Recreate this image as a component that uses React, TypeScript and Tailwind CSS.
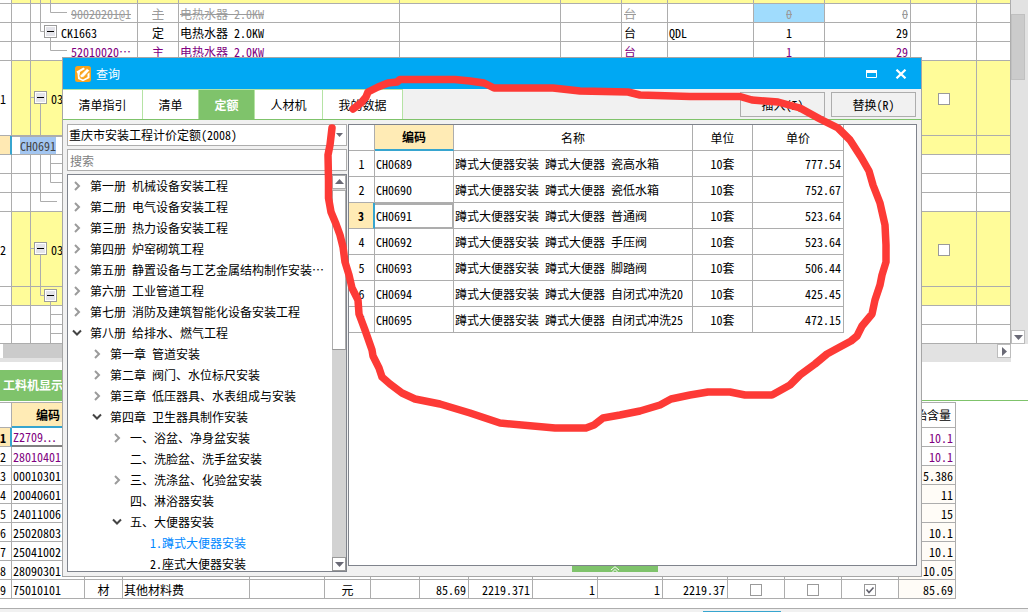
import { useState } from 'react';
import type { ReactNode } from 'react';

type TreeNode = { label: string; level: 0 | 1 | 2 | 3; state?: 'open' | 'closed' };

const tree: TreeNode[] = [
  { label: '第一册 机械设备安装工程', level: 0, state: 'closed' },
  { label: '第二册 电气设备安装工程', level: 0, state: 'closed' },
  { label: '第三册 热力设备安装工程', level: 0, state: 'closed' },
  { label: '第四册 炉窑砌筑工程', level: 0, state: 'closed' },
  { label: '第五册 静置设备与工艺金属结构制作安装⋯', level: 0, state: 'closed' },
  { label: '第六册 工业管道工程', level: 0, state: 'closed' },
  { label: '第七册 消防及建筑智能化设备安装工程', level: 0, state: 'closed' },
  { label: '第八册 给排水、燃气工程', level: 0, state: 'open' },
  { label: '第一章 管道安装', level: 1, state: 'closed' },
  { label: '第二章 阀门、水位标尺安装', level: 1, state: 'closed' },
  { label: '第三章 低压器具、水表组成与安装', level: 1, state: 'closed' },
  { label: '第四章 卫生器具制作安装', level: 1, state: 'open' },
  { label: '一、浴盆、净身盆安装', level: 2, state: 'closed' },
  { label: '二、洗脸盆、洗手盆安装', level: 2 },
  { label: '三、洗涤盆、化验盆安装', level: 2, state: 'closed' },
  { label: '四、淋浴器安装', level: 2 },
  { label: '五、大便器安装', level: 2, state: 'open' },
  { label: '1.蹲式大便器安装', level: 3 },
  { label: '2.座式大便器安装', level: 3 },
];

const indent = ['pl-1', 'pl-6', 'pl-11', 'pl-16'];

const quotas = [
  { code: 'CH0689', name: '蹲式大便器安装 蹲式大便器 瓷高水箱', unit: '10套', price: '777.54' },
  { code: 'CH0690', name: '蹲式大便器安装 蹲式大便器 瓷低水箱', unit: '10套', price: '752.67' },
  { code: 'CH0691', name: '蹲式大便器安装 蹲式大便器 普通阀', unit: '10套', price: '523.64' },
  { code: 'CH0692', name: '蹲式大便器安装 蹲式大便器 手压阀', unit: '10套', price: '523.64' },
  { code: 'CH0693', name: '蹲式大便器安装 蹲式大便器 脚踏阀', unit: '10套', price: '506.44' },
  { code: 'CH0694', name: '蹲式大便器安装 蹲式大便器 自闭式冲洗20', unit: '10套', price: '425.45' },
  { code: 'CH0695', name: '蹲式大便器安装 蹲式大便器 自闭式冲洗25', unit: '10套', price: '472.15' },
];

const materials = [
  { code: 'Z2709⋯', amount: '10.1', main: true },
  { code: '28010401', amount: '10.1', main: true },
  { code: '00010301', amount: '5.386' },
  { code: '20040601', amount: '11' },
  { code: '24011006', amount: '15' },
  { code: '25020803', amount: '10.1' },
  { code: '25041002', amount: '10.1' },
  { code: '28090301', amount: '10.05' },
];

const tabs = [
  { label: '清单指引', width: 'w-20' },
  { label: '清单', width: 'w-14' },
  { label: '定额', width: 'w-14' },
  { label: '人材机', width: 'w-17' },
  { label: '我的数据', width: 'w-20' },
];

function Cell({ children, className = '', span }: { children?: ReactNode; className?: string; span?: number }) {
  return (
    <td
      colSpan={span}
      className={`overflow-hidden whitespace-nowrap border-r border-b border-[#adadad] p-0 leading-4 ${className}`}
    >
      {children}
    </td>
  );
}

function Blank({ count, className = '' }: { count: number; className?: string }) {
  return (
    <>
      {Array.from({ length: count }, (_, i) => (
        <Cell key={i} className={className} />
      ))}
    </>
  );
}

function Tick({ label, checked = false }: { label: string; checked?: boolean }) {
  const [on, setOn] = useState(checked);
  return (
    <span className="relative mx-auto block size-3">
      <input
        type="checkbox"
        aria-label={label}
        checked={on}
        onChange={() => setOn(!on)}
        className="block size-3 appearance-none border border-[#9a9a9a] bg-white"
      />
      {on && (
        <svg viewBox="0 0 12 12" className="pointer-events-none absolute inset-0 size-3" fill="none" stroke="#62626e" strokeWidth="1.6">
          <path d="M2.5 5.5 5 8.5 9.5 3.5" />
        </svg>
      )}
    </span>
  );
}

function TreeBox({ x, y }: { x: number; y: number }) {
  return (
    <g>
      <rect x={x + 0.5} y={y + 0.5} width="12" height="12" fill="#fff" stroke="#9d9d9d" />
      <rect x={x + 2} y={y + 2} width="9" height="9" fill="#e4e4ea" />
      <path d={`M${x + 3} ${y + 6.5}h7`} stroke="#000" />
    </g>
  );
}

function BillTable() {
  const yellow = 'bg-[#fffc99]';
  return (
    <div className="relative min-w-0 flex-1">
      <table className="w-full table-fixed border-separate border-spacing-0 bg-white [&_td]:pt-px">
        <colgroup>
          <col className="w-3" />
          <col className="w-[19px]" />
          <col className="w-[107px]" />
          <col className="w-[41px]" />
          <col className="w-[221px]" />
          <col className="w-[161px]" />
          <col className="w-[61px]" />
          <col className="w-[46px]" />
          <col className="w-[86px]" />
          <col className="w-[71px]" />
          <col className="w-[86px]" />
          <col className="w-[66px]" />
          <col />
        </colgroup>
        <tbody>
          <tr className="h-1">
            <Cell />
            <Blank count={12} className={yellow} />
          </tr>
          <tr className="h-[19px] text-[#9b9b9b] line-through">
            <Blank count={2} />
            <Cell className="pl-10">90020201@1</Cell>
            <Cell className="text-center">主</Cell>
            <Cell className="pl-px">电热水器 2.0KW</Cell>
            <Blank count={2} />
            <Cell className="pl-0.5">台</Cell>
            <Cell />
            <Cell className="bg-[#a0dcfd] text-center">0</Cell>
            <Cell className="pr-0.5 text-right">0</Cell>
            <Blank count={2} />
          </tr>
          <tr className="h-[19px]">
            <Blank count={2} />
            <Cell className="pl-[30px]">CK1663</Cell>
            <Cell className="text-center">定</Cell>
            <Cell className="pl-px">电热水器 2.0KW</Cell>
            <Blank count={2} />
            <Cell className="pl-0.5">台</Cell>
            <Cell className="pl-px">QDL</Cell>
            <Cell className="text-center">1</Cell>
            <Cell className="pr-0.5 text-right">29</Cell>
            <Blank count={2} />
          </tr>
          <tr className="h-[19px] text-[#800080]">
            <Blank count={2} />
            <Cell className="pl-10">52010020⋯</Cell>
            <Cell className="text-center">主</Cell>
            <Cell className="pl-px">电热水器 2.0KW</Cell>
            <Blank count={2} />
            <Cell className="pl-0.5">台</Cell>
            <Cell />
            <Cell className="text-center">1</Cell>
            <Cell className="pr-0.5 text-right">29</Cell>
            <Blank count={2} />
          </tr>
          <tr className="h-[75px]">
            <Cell>1</Cell>
            <Cell className={yellow} />
            <Cell className={`${yellow} pl-5`}>03</Cell>
            <Blank count={8} className={yellow} />
            <Cell className={yellow}>
              <Tick label="清单 1" />
            </Cell>
            <Cell className={yellow} />
          </tr>
          <tr className="h-[19px]">
            <Cell className="border-r-2 border-r-[#37a5cf] bg-[#ffe9b3]" />
            <Cell span={2} className="border-t border-[#37a5cf] pl-2">
              <span className="bg-[#a3c6f1] text-[#444]">CH0691</span>
            </Cell>
            <Blank count={10} className={yellow} />
          </tr>
          <tr className="h-[19px]"><Blank count={13} /></tr>
          <tr className="h-[19px]"><Blank count={13} /></tr>
          <tr className="h-[19px]"><Blank count={13} /></tr>
          <tr className="h-[75px]">
            <Cell>2</Cell>
            <Cell className={yellow} />
            <Cell className={`${yellow} pl-5`}>03</Cell>
            <Blank count={8} className={yellow} />
            <Cell className={yellow}>
              <Tick label="清单 2" />
            </Cell>
            <Cell className={yellow} />
          </tr>
          <tr className="h-[19px]">
            <Cell />
            <Blank count={12} className={yellow} />
          </tr>
          <tr className="h-[19px]"><Blank count={13} /></tr>
          <tr className="h-[19px]"><Blank count={13} /></tr>
        </tbody>
      </table>
      {/* connector lines of the outline */}
      <svg width="70" height="344" viewBox="0 0 70 344" className="pointer-events-none absolute top-0 left-0" fill="none">
        <path
          stroke="#adadad"
          d="M40.5 0V31.5H44M50.5 0V12.5H67M50.5 38V50.5H67M31 97.5H35M40.5 104V135M40.5 155V201.5H57M50.5 155V182.5H67M50.5 163.5H67M31 248.5H35M40.5 255V295.5H44M50.5 302V344M50.5 314.5H67M50.5 333.5H67"
        />
        <TreeBox x={44} y={25} />
        <TreeBox x={34} y={91} />
        <TreeBox x={34} y={242} />
        <TreeBox x={44} y={289} />
      </svg>
    </div>
  );
}

function MaterialTable() {
  return (
    <table className="w-[956px] table-fixed border-separate border-spacing-0 border-t border-[#adadad] bg-white [&_td]:pt-px">
      <colgroup>
        <col className="w-3" />
        <col className="w-[73px]" />
        <col className="w-[38px]" />
        <col className="w-[127px]" />
        <col className="w-[75px]" />
        <col className="w-[46px]" />
        <col className="w-[49px]" />
        <col className="w-[49px]" />
        <col className="w-16" />
        <col className="w-[65px]" />
        <col className="w-[65px]" />
        <col className="w-[65px]" />
        <col className="w-[57px]" />
        <col className="w-[57px]" />
        <col className="w-[57px]" />
        <col className="w-[57px]" />
      </colgroup>
      <thead>
        <tr className="h-[25px]">
          <Cell />
          <th className="border-r border-b-2 border-r-[#adadad] border-b-[#37a5cf] bg-[#ffebb5] p-0 leading-4 font-bold">编码</th>
          <Blank count={13} />
          <th className="border-r border-b border-[#adadad] p-0 leading-4 font-normal whitespace-nowrap">原始含量</th>
        </tr>
      </thead>
      <tbody>
        {materials.map((m, i) => (
          <tr key={m.code} className={`h-[19px] ${m.main ? 'text-[#800080]' : ''}`}>
            <Cell className={`text-black ${i === 0 ? 'border-r-2 border-r-[#37a5cf] bg-[#ffe9b3] font-bold' : ''}`}>
              {i + 1}
            </Cell>
            <Cell className={i === 0 ? 'border-b-2 border-b-[#808080] pl-px' : 'pl-px'}>{m.code}</Cell>
            <Blank count={13} />
            <Cell className={`pr-0.5 text-right ${m.main ? '' : 'bg-[#fffcf7]'}`}>{m.amount}</Cell>
          </tr>
        ))}
        <tr className="h-[19px]">
          <Cell>9</Cell>
          <Cell className="pl-px">75010101</Cell>
          <Cell className="text-center">材</Cell>
          <Cell className="pl-px">其他材料费</Cell>
          <Cell />
          <Cell className="text-center">元</Cell>
          <Cell />
          <Cell className="pr-0.5 text-right">85.69</Cell>
          <Cell className="pr-0.5 text-right">2219.371</Cell>
          <Cell className="pr-0.5 text-right">1</Cell>
          <Cell className="pr-0.5 text-right">1</Cell>
          <Cell className="pr-0.5 text-right">2219.37</Cell>
          <Cell><Tick label="75010101 a" /></Cell>
          <Cell><Tick label="75010101 b" /></Cell>
          <Cell><Tick label="75010101 c" checked /></Cell>
          <Cell className="bg-[#fffcf7] pr-0.5 text-right">85.69</Cell>
        </tr>
      </tbody>
    </table>
  );
}

function Arrow({ dir }: { dir: 'up' | 'down' | 'right' }) {
  const d = { up: 'M0 6 4.5 1 9 6z', down: 'M0 2H9L4.5 7z', right: 'M2 0V9L7 4.5z' }[dir];
  return (
    <svg width="9" height="9" viewBox="0 0 9 9" fill="#6a6a76">
      <path d={d} />
    </svg>
  );
}

function Chevron({ open }: { open: boolean }) {
  return open ? (
    <svg width="10" height="10" viewBox="0 0 10 10" fill="none" stroke="#444" strokeWidth="2">
      <path d="M1 2.5 5 6.5 9 2.5" />
    </svg>
  ) : (
    <svg width="10" height="10" viewBox="0 0 10 10" fill="none" stroke="#9b9b9b" strokeWidth="2">
      <path d="M3 1 7 5 3 9" />
    </svg>
  );
}

function QuotaTree() {
  const [selected, setSelected] = useState('1.蹲式大便器安装');
  return (
    <div className="flex min-h-0 flex-1 border border-[#7f838c] bg-white">
      <ul className="min-w-0 flex-1 overflow-hidden">
        {tree.map((node) => (
          <li key={node.label} className={indent[node.level]}>
            <button
              onClick={() => setSelected(node.label)}
              className={`flex h-[21px] w-full items-center gap-2 leading-4 whitespace-nowrap ${
                node.label === selected ? 'text-[#0088ff]' : ''
              }`}
            >
              <span className="w-2.5 shrink-0">{node.state && <Chevron open={node.state === 'open'} />}</span>
              {node.label}
            </button>
          </li>
        ))}
      </ul>
      <div className="flex w-3.5 flex-col bg-[#d2d2d2]">
        <button aria-label="向上滚动" className="flex h-3.5 items-center justify-center border border-[#adadad] bg-white">
          <Arrow dir="up" />
        </button>
        <div className="mt-px h-40 border border-[#adadad] border-b-[#999] bg-white" />
        <button aria-label="向下滚动" className="mt-auto flex h-3.5 items-center justify-center border border-[#999] bg-white">
          <Arrow dir="down" />
        </button>
      </div>
    </div>
  );
}

function QuotaGrid() {
  const [active, setActive] = useState(2);
  const head = 'border-r border-b border-[#adadad] p-0 font-normal leading-4';
  return (
    <table className="w-[495px] table-fixed border-separate border-spacing-0">
      <colgroup>
        <col className="w-[26px]" />
        <col className="w-[79px]" />
        <col className="w-[239px]" />
        <col className="w-[60px]" />
        <col className="w-[91px]" />
      </colgroup>
      <thead>
        <tr className="h-[26px]">
          <td className={head} />
          <th className="border-r border-b-2 border-r-[#adadad] border-b-[#37a5cf] bg-[#ffebb5] p-0 leading-4 font-bold">编码</th>
          <th className={head}>名称</th>
          <th className={head}>单位</th>
          <th className={head}>单价</th>
        </tr>
      </thead>
      <tbody>
        {quotas.map((q, i) => (
          <tr key={q.code} className="h-[26px]" onClick={() => setActive(i)}>
            <Cell
              className={`text-center ${i === active ? 'border-r-2 border-r-[#37a5cf] bg-[#ffebb5] font-bold' : ''}`}
            >
              {i + 1}
            </Cell>
            <Cell className={i === active ? 'border-t-2 border-r-2 border-b-2 border-[#808080] pl-px' : 'pl-px'}>
              {q.code}
            </Cell>
            <Cell className="pl-px">{q.name}</Cell>
            <Cell className="text-center">{q.unit}</Cell>
            <Cell className="pr-0.5 text-right">{q.price}</Cell>
          </tr>
        ))}
      </tbody>
    </table>
  );
}

function QueryDialog() {
  const [tab, setTab] = useState('定额');
  return (
    <section
      role="dialog"
      aria-label="查询"
      className="absolute top-[57px] right-[106px] bottom-[35px] left-[62px] flex flex-col border border-[#a6a6a6] bg-[#f1f1f1]"
    >
      <header className="flex h-[31px] shrink-0 items-center bg-[#00a8f3] pr-3.5 pl-3 text-white">
        <svg width="16" height="16" viewBox="0 0 16 16" fill="none">
          <rect width="16" height="16" rx="2.5" fill="#f9a21b" />
          <path
            d="M1.5 5.5 8.500 1.500 10 3 5 6 4.500 10 5 12 8 13.500 12.500 11V8L14.500 6.500V12L8 15.200 3 13 2.500 7.500z"
            fill="#fff"
          />
          <path d="M5 9.500 12 2.500 14.700 4.500 8.500 11.200 5.500 11.800z" fill="#fff" stroke="#f9a21b" strokeWidth=".7" />
        </svg>
        <h2 className="ml-[5px] flex-1">查询</h2>
        <button aria-label="最大化" className="mr-[17px]">
          <svg width="12" height="10" viewBox="0 0 12 10" fill="none" className="block">
            <path d="M.5 1V8.5H10.5V1" stroke="#fff" />
            <path d="M0 2.5H11" stroke="#fff" strokeWidth="3" />
          </svg>
        </button>
        <button aria-label="关闭">
          <svg width="12" height="10" viewBox="0 0 12 10" fill="none" className="block" stroke="#fff" strokeWidth="2.2">
            <path d="M1.5 .7 10.5 9.3M10.5 .7 1.5 9.3" />
          </svg>
        </button>
      </header>

      <div className="flex h-[31px] shrink-0 border-b border-[#7fc36b]">
        {tabs.map((t) => (
          <button
            key={t.label}
            onClick={() => setTab(t.label)}
            className={`border-t border-r border-[#b5e3a4] leading-4 ${t.width} ${
              t.label === tab ? 'bg-[#7fc36b] font-bold text-white' : 'bg-white'
            }`}
          >
            {t.label}
          </button>
        ))}
        <div className="ml-auto flex items-start gap-1.5 pt-[3px] pr-[5px]">
          <button className="h-[25px] w-[85px] border border-[#adadad] leading-4">插入(I)</button>
          <button className="h-[25px] w-[85px] border border-[#adadad] leading-4">替换(R)</button>
        </div>
      </div>

      <div className="flex min-h-0 flex-1 gap-px p-1">
        <div className="flex w-[280px] shrink-0 flex-col gap-[3px]">
          <div className="relative">
            <select
              aria-label="定额库"
              className="block h-[22px] w-full appearance-none border border-[#adadad] bg-white pl-px leading-4"
            >
              <option>重庆市安装工程计价定额(2008)</option>
            </select>
            <svg width="7" height="4" viewBox="0 0 7 4" className="pointer-events-none absolute top-[9px] right-1" fill="#6a6a76">
              <path d="M0 0H7L3.5 4z" />
            </svg>
          </div>
          <input
            aria-label="搜索"
            placeholder="搜索"
            className="h-[22px] shrink-0 border border-[#adadad] bg-white px-0.5 placeholder:text-[#808080]"
          />
          <QuotaTree />
        </div>
        <div className="flex min-w-0 flex-1 flex-col">
          <div className="min-h-0 flex-1 border border-[#7f838c] bg-white">
            <QuotaGrid />
          </div>
          <div className="flex h-1.5 justify-center pr-9">
            <button aria-label="展开" className="flex w-[86px] items-end justify-center bg-[#7fc36b]">
              <svg width="10" height="6" viewBox="0 0 10 6" fill="none" stroke="#fff">
                <path d="M1 4 5 .7 9 4M2.5 6 5 3.5 7.5 6" />
              </svg>
            </button>
          </div>
        </div>
      </div>
    </section>
  );
}

function Marker() {
  return (
    <svg
      viewBox="0 0 1028 612"
      className="pointer-events-none absolute top-0 left-0 w-[1028px]"
      fill="none"
      stroke="#fd3a36"
      strokeWidth="7.5"
      strokeLinecap="round"
      strokeLinejoin="round"
    >
      <path d="M353 109 361 103 366 97 368 92 378 87 388 83 397 82 400 79.500H455L470 81 484 83 494 88H553L580 91 628 92 640 95 690 96.500H740L752 100 778 102 800 108 820 119 838 128 850 140 861 157 869 171 873 185 880 203 885 225 886 245V262L882 275 880 285 875 300 872 314 862 326 857 336 851 341 838 348 827 354 815 364 800 375 790 385 772 395H745L730 392H708L690 395 671 399 660 405 640 411 620 415 603 418 594 425 586 428H555L500 423 470 413 440 404 415 399 402 393 390 384 382 377 379 368 373 356 372 350 365 330 359 314 358 300 352 288 349 275 345 262 343 247 340 235 336 224 331 212 328.500 198V180L328 155 330 145 332 128" />
    </svg>
  );
}

export default function App() {
  return (
    <div className="relative flex min-h-screen flex-col overflow-hidden bg-white text-[12px] leading-4 text-black font-['Noto_Sans_Mono_CJK_SC','Noto_Sans_CJK_SC',sans-serif]">
      <div className="flex">
        <BillTable />
        <div className="flex w-[17px] flex-col items-start bg-[#e2e2e2] pt-3.5">
          <div className="h-[66px] w-3.5 border border-[#c0c0c0] bg-[#cbcbcb]" />
          <button aria-label="向下滚动" className="mt-auto flex h-3.5 w-3.5 items-center justify-center border border-[#bdbdbd] bg-white">
            <Arrow dir="down" />
          </button>
        </div>
      </div>
      <div className="mr-[17px] flex h-[18px] items-start bg-[#e2e2e2]">
        <div className="h-3.5 w-[3px] bg-white" />
        <div className="h-3.5 w-1/2 bg-[#cbcbcb]" />
        <button aria-label="向右滚动" className="ml-auto flex size-3.5 items-center justify-center border border-[#bdbdbd] bg-white">
          <Arrow dir="right" />
        </button>
      </div>

      <div className="mt-2 flex border-b border-[#7fc36b]">
        <h3 className="h-[30px] bg-[#7fc36b] px-[3px] leading-[30px] font-bold whitespace-nowrap text-white">工料机显示</h3>
      </div>
      <div className="mt-px">
        <MaterialTable />
      </div>

      <footer className="mt-auto h-1 border-t border-[#adadad] bg-[#f1f1f1] pt-0.5">
        <div className="ml-[703px] h-px w-[78px] bg-[#37a5cf]" />
      </footer>

      <QueryDialog />
      <Marker />
    </div>
  );
}
